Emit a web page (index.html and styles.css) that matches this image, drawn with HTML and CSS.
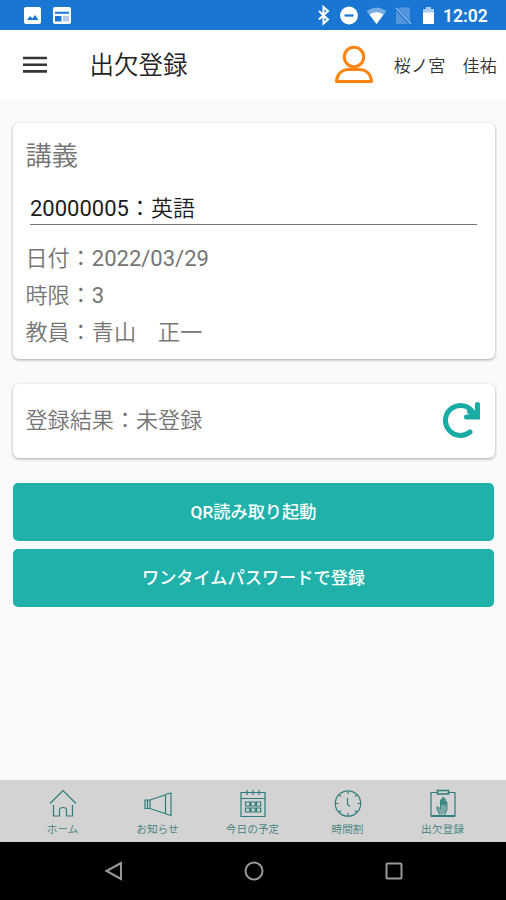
FILE: index.html
```html
<!DOCTYPE html>
<html lang="ja">
<head>
    <meta charset="UTF-8">
    <meta name="viewport" content="width=device-width, initial-scale=1.0">
    <title>出欠登録</title>
    <link rel="stylesheet" href="styles.css">
</head>
<body>
    <div class="status-bar">
        <svg width="253" height="30" viewBox="0 0 253 30">
            <rect x="24" y="7" width="17" height="17" rx="2" fill="#fff"/>
            <path d="M27 20l3-4 2.500 2.500 2.500-3.500 3.500 5z" fill="#1976d2"/>
            <rect x="53" y="7" width="18" height="17" rx="2" fill="#fff"/>
            <path d="M55 11.800h14v2h-14zM55 16h6.500v5.500H55z" fill="#1976d2"/>
            <path d="M63 16h6v5.500h-6z" fill="#b5c9ea"/>
        </svg>
        <svg width="187" height="30" viewBox="253 0 187 30">
            <path d="M319 11l9 8.500-4.500 4V7l4.500 4-9 8.500" fill="none" stroke="#fff" stroke-width="2"/>
            <circle cx="349" cy="15.500" r="9" fill="#fff"/>
            <path d="M344.500 15.500h9" stroke="#1976d2" stroke-width="2.200"/>
            <path d="M366.500 11q10-7 20 0l-10 13z" fill="#75ade4"/>
            <path d="M369.500 14.500q7-4.500 14 0l-7 9.500z" fill="#fff"/>
            <path d="M396 11l3.500-3.500H410V24h-14z" fill="#5295dc"/>
            <path d="M395.500 8l15.500 16.500" stroke="#1976d2" stroke-width="3"/>
            <path d="M396 8l15 16" stroke="#8dbbe9" stroke-width="1.300"/>
            <path d="M423 9h3V7h5v2h3v5h-11z" fill="#a8cbef"/>
            <path d="M423 12.500h11V24h-11z" fill="#fff"/>
        </svg>
        <span class="clock">12:02</span>
    </div>

    <header class="header">
        <svg class="menu-icon" width="24" height="18" viewBox="0 0 24 18">
            <path d="M0 2h24M0 8.700h24M0 15.400h24" stroke="#353535" stroke-width="2.600"/>
        </svg>
        <h1 class="title">出欠登録</h1>
        <svg class="user-icon" width="40" height="40" viewBox="0 0 40 40" fill="none" stroke="#fb8512" stroke-width="3">
            <circle cx="20" cy="12" r="9.700"/>
            <path d="M2.500 36.500v-1C3.500 28 9 24.500 15 24.500h10c6 0 11.500 3.500 12.500 11v1z" stroke-linejoin="round"/>
        </svg>
        <span class="user-name">桜ノ宮　佳祐</span>
    </header>

    <main class="content">
        <section class="card lecture">
            <h2 class="card-title">講義</h2>
            <div class="select"><span class="num">20000005</span>：英語</div>
            <p class="info">日付：<span class="num">2022/03/29</span></p>
            <p class="info">時限：<span class="num">3</span></p>
            <p class="info">教員：青山　正一</p>
        </section>

        <section class="card result">
            <p class="info">登録結果：未登録</p>
            <svg width="40" height="40" viewBox="0 0 40 40" fill="none" stroke="#19aca4" stroke-width="5" stroke-linecap="round">
                <path d="M28 31A15 15 0 1 1 31.500 12"/>
                <path d="M35.500 3.500V16H24.500M27.500 10.500l6 4.500" stroke-linejoin="miter"/>
            </svg>
        </section>

        <button class="button">QR読み取り起動</button>
        <button class="button">ワンタイムパスワードで登録</button>
    </main>

    <nav class="tabs">
        <a class="tab">
            <svg class="tab-icon" viewBox="0 0 30 30">
                <path d="M2 15.500L15 2.500l13 13M5.500 17v11h6v-6q0-2.500 3.500-2.500t3.500 2.500v6h6V17"/>
            </svg>
            <span>ホーム</span>
        </a>
        <a class="tab">
            <svg class="tab-icon" viewBox="0 0 30 30">
                <path d="M2 12v8.500h5V12zM7 12l15-5M7 20.500l15 5M22.500 7v18.500M22 6.500l6-1.500v22.500l-6-2M4.500 12v8.500"/>
            </svg>
            <span>お知らせ</span>
        </a>
        <a class="tab">
            <svg class="tab-icon" viewBox="0 0 30 30">
                <path d="M3 4.500h24v24H3zM3 10.500h24M9 2v5M15 2v5M21 2v5"/>
                <path d="M7.500 14h4.200v4H7.500zM13 14h4.200v4H13zM18.500 14h4.200v4h-4.200zM7.500 20h4.200v4H7.500zM13 20h4.200v4H13zM18.500 20h4.200v4h-4.200z"/>
            </svg>
            <span>今日の予定</span>
        </a>
        <a class="tab">
            <svg class="tab-icon" viewBox="0 0 30 30">
                <circle cx="15" cy="15.500" r="12.700"/>
                <path d="M14.500 10v6.500l2.500 2M15 3.500V6M15 25v2.500M3 15.500h2.500M24.500 15.500H27M6.500 7l1.500 1.500M22 22.500l1.500 1.500M6.500 24L8 22.500M22 8.500L23.500 7"/>
            </svg>
            <span>時間割</span>
        </a>
        <a class="tab">
            <svg class="tab-icon" viewBox="0 0 30 30">
                <path d="M9 4.500H3v23.500h24V4.500h-6"/>
                <path d="M9.500 2.500h11V6h-11z" stroke-width="1.700"/>
                <path d="M3 28h24" stroke-width="2"/>
                <path d="M11.500 26.500l-3-7 1-1 3 2.500V12q1-1.500 1.500 0v5-7q1-1.500 1.700 0v7-6q1-1.500 1.700 0v7-4q1.300-1 1.600 0v7l-2 5.500" fill="#7fa9a6" stroke-width="0.900"/>
            </svg>
            <span>出欠登録</span>
        </a>
    </nav>

    <div class="system-nav">
        <svg width="20" height="20" viewBox="0 0 20 20"><path d="M2.500 10L17 2v16z"/></svg>
        <svg width="20" height="20" viewBox="0 0 20 20"><circle cx="10" cy="10" r="8.500"/></svg>
        <svg width="20" height="20" viewBox="0 0 20 20"><rect x="2.500" y="2.500" width="15" height="15" rx="1"/></svg>
    </div>
</body>
</html>
```
FILE: styles.css
```css
*{
    box-sizing: border-box;
    margin: 0;
    padding: 0;
}
body{
    display: flex;
    flex-direction: column;
    height: 900px;
    background: #fafafa;
    font-family: Roboto, "Noto Sans CJK JP", sans-serif;
    font-weight: 350;
    overflow: hidden;
}
.status-bar{
    display: flex;
    height: 30px;
    background: #1976d2;
    color: #fff;
}
.clock{
    margin-left: 3px;
    font-size: 17.5px;
    font-weight: 600;
    line-height: 33px;
}
.header{
    display: flex;
    align-items: center;
    height: 70px;
    padding: 0 9px 0 23px;
    background: #fff;
    color: #333;
}
.title{
    margin-left: 42.5px;
    padding-bottom: 3px;
    font-size: 24.5px;
    font-weight: 350;
    color: #222;
}
.user-icon{
    margin-left: auto;
}
.user-name{
    margin-left: 20px;
    padding-bottom: 2px;
    font-size: 17.2px;
    white-space: nowrap;
}
.content{
    flex: 1;
    padding: 23px 11px 0 13px;
}
.card{
    border-radius: 6px;
    background: #fff;
    box-shadow: 0 1px 3px rgba(0, 0, 0, .35);
}
.lecture{
    height: 236px;
    padding: 14px 18px 0 12.5px;
}
.card-title{
    height: 38px;
    font-size: 26.3px;
    font-weight: 350;
    line-height: 38px;
    color: #757575;
}
.select{
    height: 50px;
    margin: 0 0 15px 4.5px;
    border-bottom: 1px solid #777;
    font-size: 22px;
    line-height: 67px;
    color: #1c1c1c;
}
.info{
    font-size: 22.1px;
    line-height: 37px;
    color: #757575;
}
.num{
    font-size: 22px;
    font-weight: 400;
}
.result{
    display: flex;
    align-items: center;
    justify-content: space-between;
    height: 74px;
    margin: 25px 0 24.5px;
    padding: 0 13px 1px 12.5px;
}
/* 登録ボタン */
.button{
    display: block;
    width: 481px;
    height: 58px;
    margin-bottom: 8px;
    padding-bottom: 2px;
    border: none;
    border-radius: 5px;
    background: #20b2aa;
    color: #fff;
    font-family: inherit;
    font-size: 17.2px;
    font-weight: 500;
}
.tabs{
    display: flex;
    height: 62px;
    padding: 8px 16px 0 15px;
    background: #d3d3d3;
}
.tab{
    display: flex;
    flex: 1;
    flex-direction: column;
    align-items: center;
    font-size: 10.7px;
    line-height: 24px;
    color: #3d7f7c;
}
.tab-icon{
    width: 30px;
    height: 30px;
    fill: none;
    stroke: #2e7f7c;
    stroke-width: 1.2;
}
/* Androidのナビゲーション */
.system-nav{
    display: flex;
    justify-content: center;
    gap: 120px;
    height: 58px;
    padding: 19px 0 0 1px;
    background: #000;
}
.system-nav svg{
    fill: none;
    stroke: #999;
    stroke-width: 2;
}
```
